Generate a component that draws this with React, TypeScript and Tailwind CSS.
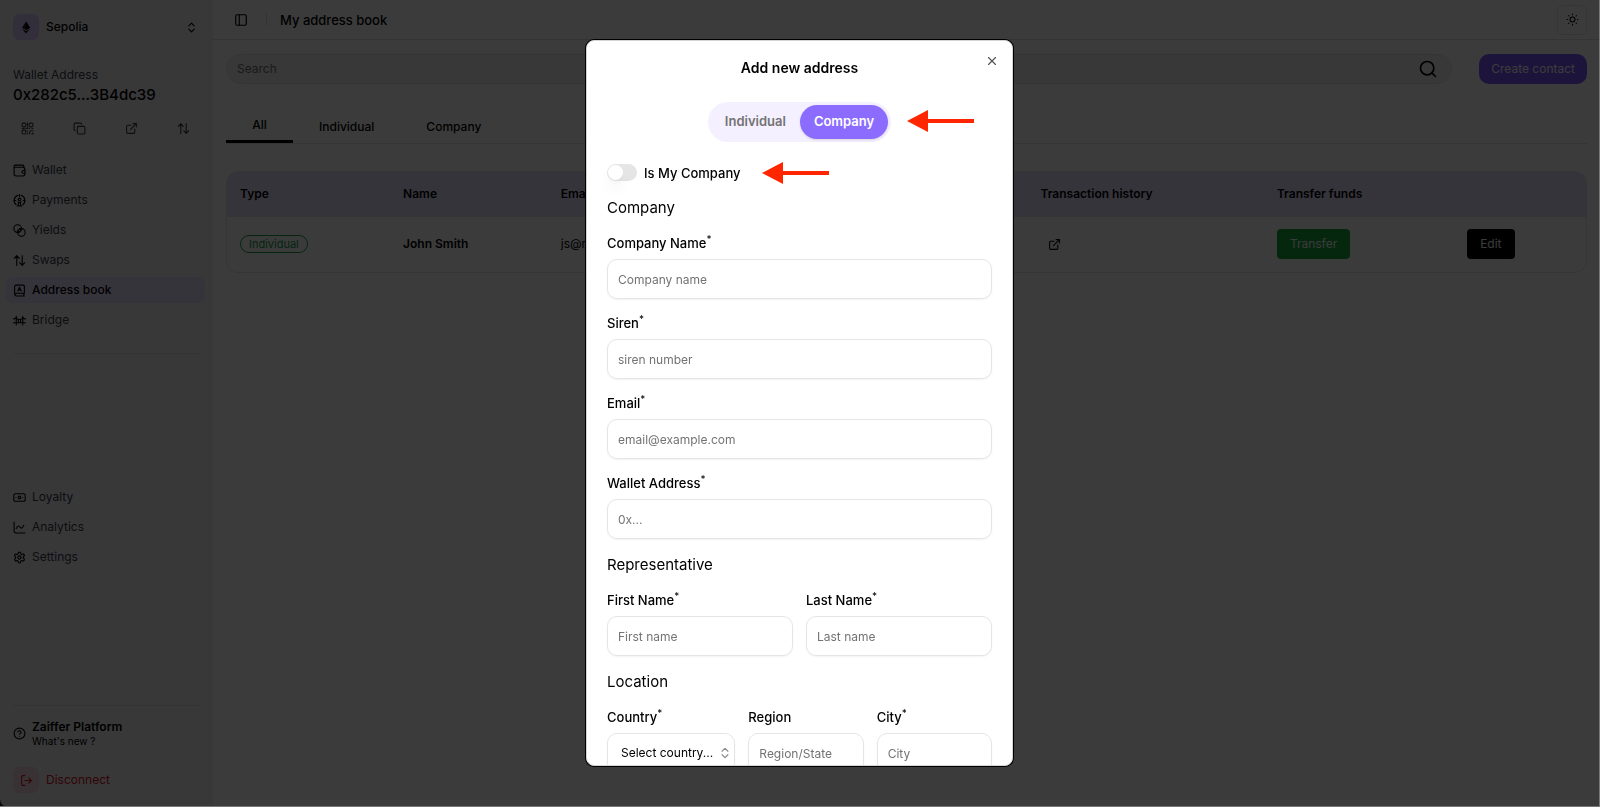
import React, { useState } from 'react';
import {
  ChevronsUpDown,
  CircleHelp,
  Copy,
  ExternalLink,
  LogOut,
  PanelLeft,
  Search,
  Settings,
  X,
} from 'lucide-react';

type IconProps = { className?: string };

const Svg: React.FC<IconProps & { children: React.ReactNode }> = ({ className, children }) => (
  <svg
    viewBox="0 0 24 24"
    fill="none"
    stroke="currentColor"
    strokeWidth="2"
    strokeLinecap="round"
    strokeLinejoin="round"
    className={className}
    aria-hidden="true"
  >
    {children}
  </svg>
);

const EthIcon = ({ className }: IconProps) => (
  <svg viewBox="0 0 16 24" className={className} aria-hidden="true">
    <path d="M8 0 L0 12.5 L8 17 L16 12.5 Z" fill="#222" />
    <path d="M8 0 L8 17 L16 12.5 Z" fill="#000" />
    <path d="M0 14.5 L8 19 L16 14.5 L8 24 Z" fill="#111" />
  </svg>
);

const WalletIcon = ({ className }: IconProps) => (
  <Svg className={className}>
    <path d="M2 5v13a4 4 0 0 0 4 4h12a4 4 0 0 0 4-4v-8a4 4 0 0 0-4-4H4a2 2 0 0 1 0-4h14a2 2 0 0 1 2 2v2.500" />
    <path d="M22 12h-3a2.500 2.500 0 0 0 0 5h3" />
  </Svg>
);

const PaymentsIcon = ({ className }: IconProps) => (
  <Svg className={className}>
    <path d="M6 20A10 10 0 0 1 9 2.500M18 20A10 10 0 0 0 15 2.500" />
    <path d="M12 1v4M8 22h8M9.500 22l1-6M14.500 22l-1-6M2 12h3M19 12h3" />
    <path d="M15 9.500c-.5-1-1.500-1.500-3-1.500-3.500 0-3.500 4 0 4s3.500 4 0 4c-1.500 0-2.500-.5-3-1.500" />
  </Svg>
);

const YieldsIcon = ({ className }: IconProps) => (
  <Svg className={className}>
    <circle cx="8.500" cy="8.500" r="7" />
    <circle cx="15.500" cy="15.500" r="7" />
    <path d="M12 9l3 3M9 12l3 3" />
  </Svg>
);

const SwapIcon = ({ className }: IconProps) => (
  <Svg className={className}>
    <path d="M7 21V3M2.500 8 7 3l4.500 5M17 3v18M12.500 16l4.500 5 4.500-5" />
  </Svg>
);

const AddressBookIcon = ({ className }: IconProps) => (
  <Svg className={className}>
    <path d="M21 17V4a2 2 0 0 0-2-2H6a3 3 0 0 0-3 3v14M21 17H6a2.500 2.500 0 0 0 0 5h15M20 17v5" />
    <path d="M9 13l3-7 3 7M10 11h4" />
  </Svg>
);

const BridgeIcon = ({ className }: IconProps) => (
  <Svg className={className}>
    <path d="M6 4v16M18 4v16M1 16h22M1 9c3 0 5-2 5-4 0 3 3 5 6 5s6-2 6-5c0 2 2 4 5 4M10 10v6M14 10v6" />
  </Svg>
);

const LoyaltyIcon = ({ className }: IconProps) => (
  <Svg className={className}>
    <rect x="1.500" y="5" width="21" height="14" rx="3" />
    <circle cx="12" cy="12" r="2.500" />
    <path d="M5.500 12h.01M18.500 12h.01" />
  </Svg>
);

const AnalyticsIcon = ({ className }: IconProps) => (
  <Svg className={className}>
    <path d="M2 2v17a3 3 0 0 0 3 3h17" />
    <path d="M6 14c3-7 5-5 7-2.500s4 2.500 7-3.500" />
  </Svg>
);

const QrIcon = ({ className }: IconProps) => (
  <Svg className={className}>
    <rect x="2" y="2" width="7" height="7" rx="2" />
    <rect x="15" y="2" width="7" height="7" rx="2" />
    <rect x="2" y="15" width="7" height="7" rx="2" />
    <path d="M12 2v4M12 9v3H9M2 12h4M15 12h1M20 12h2M12 16v1M12 21v1M16 22v-3a3 3 0 0 1 3-3h3M22 20v2h-2" />
  </Svg>
);

const SunIcon = ({ className }: IconProps) => (
  <Svg className={className}>
    <circle cx="12" cy="12" r="4.500" />
    <path d="M12 2v1M12 21v1M2 12h1M21 12h1M4.900 4.900l.4.4M18.700 18.700l.4.4M4.900 19.100l.4-.4M18.700 5.300l.4-.4" />
  </Svg>
);

const Arrow = ({ className }: IconProps) => (
  <svg viewBox="0 0 67 22" className={className} aria-hidden="true">
    <path d="M0 11 L21 0 V9 H67 V13 H21 V22 Z" fill="#ff2600" />
  </svg>
);

const mainNav = [
  { label: 'Wallet', icon: WalletIcon },
  { label: 'Payments', icon: PaymentsIcon },
  { label: 'Yields', icon: YieldsIcon },
  { label: 'Swaps', icon: SwapIcon },
  { label: 'Address book', icon: AddressBookIcon, active: true },
  { label: 'Bridge', icon: BridgeIcon },
];

const secondaryNav = [
  { label: 'Loyalty', icon: LoyaltyIcon },
  { label: 'Analytics', icon: AnalyticsIcon },
  { label: 'Settings', icon: Settings },
];

const NavList: React.FC<{ items: { label: string; icon: React.FC<IconProps>; active?: boolean }[] }> = ({ items }) => (
  <ul className="flex flex-col gap-1 pr-2 pl-1.5">
    {items.map(({ label, icon: Icon, active }) => (
      <li key={label}>
        <a
          href="#"
          className={`flex h-[26px] items-center gap-1.5 rounded-md px-[7px] text-xs ${
            active ? 'bg-[#e6dfff] font-medium text-black' : 'text-[#3c3c46]'
          }`}
        >
          <Icon className="h-[13px] w-[13px] text-black" />
          {label}
        </a>
      </li>
    ))}
  </ul>
);

const Sidebar = () => (
  <aside className="flex w-[213px] shrink-0 flex-col bg-[#f0f0f5] pb-[14px]">
    <button type="button" className="mx-[13px] mt-[14px] flex items-center text-left">
      <span className="flex h-[26px] w-[26px] items-center justify-center rounded-md bg-[#d8ccff]">
        <EthIcon className="h-[13px] w-2" />
      </span>
      <span className="ml-[7px] flex-1 text-xs font-medium">Sepolia</span>
      <ChevronsUpDown className="mr-0.5 h-[13px] w-[13px]" />
    </button>

    <div className="mx-[13px] mt-[26px]">
      <p className="text-xs leading-[18px] text-[#3c3c46]">Wallet Address</p>
      <p className="text-[15px] leading-[22px] font-medium text-black">0x282c5...3B4dc39</p>
      <div className="mt-4 flex justify-between pr-2.5 pl-2 text-[#3c3c46]">
        <button type="button" aria-label="Show QR code"><QrIcon className="h-[13px] w-[13px]" /></button>
        <button type="button" aria-label="Copy address"><Copy className="h-[13px] w-[13px]" /></button>
        <button type="button" aria-label="Open in explorer"><ExternalLink className="h-[13px] w-[13px]" /></button>
        <button type="button" aria-label="Swap"><SwapIcon className="h-[13px] w-[13px]" /></button>
      </div>
    </div>

    <nav className="mt-[22px] flex flex-1 flex-col">
      <NavList items={mainNav} />
      <hr className="mx-[13px] mt-5 border-[#e2e2e8]" />
      <div className="mt-[130px]">
        <NavList items={secondaryNav} />
      </div>
    </nav>

    <hr className="mx-[13px] border-[#dcdce2]" />
    <a href="#" className="mx-[13px] mt-[13px] flex items-center gap-1.5">
      <CircleHelp className="h-[13px] w-[13px]" />
      <span>
        <span className="block text-xs leading-4 font-semibold">Zaiffer Platform</span>
        <span className="block text-[10px] leading-3">What's new ?</span>
      </span>
    </a>
    <button type="button" className="mx-[13px] mt-5 flex items-center gap-[7px] text-xs text-[#dc1420]">
      <span className="flex h-[26px] w-[26px] items-center justify-center rounded-md bg-[#f3d9e0]">
        <LogOut className="h-[13px] w-[13px]" />
      </span>
      Disconnect
    </button>
  </aside>
);

const ContactsTable = () => (
  <div className="mt-[27px] overflow-hidden rounded-xl border border-[#e5e5e5]">
    <table className="w-full table-fixed text-left text-xs">
      <colgroup>
        <col className="w-[12%]" />
        <col className="w-[11.6%]" />
        <col className="w-[17.6%]" />
        <col className="w-[17.7%]" />
        <col className="w-[17.4%]" />
        <col className="w-[14%]" />
        <col />
      </colgroup>
      <thead className="bg-[#e6dfff]">
        <tr className="h-[44px] border-b border-[#e5e5e5]">
          <th className="px-[13px] font-semibold">Type</th>
          <th className="px-[13px] font-semibold">Name</th>
          <th className="px-[13px] font-semibold">Email</th>
          <th className="px-[13px] font-semibold">Wallet</th>
          <th className="px-[13px] font-semibold">Transaction history</th>
          <th className="px-[13px] font-semibold">Transfer funds</th>
          <th aria-label="Actions" />
        </tr>
      </thead>
      <tbody>
        <tr className="h-[56px]">
          <td className="px-[13px]">
            <span className="inline-block rounded-full border border-[#16a34a] px-2 text-[11px] leading-4 text-[#16a34a]">
              Individual
            </span>
          </td>
          <td className="px-[13px] font-semibold">John Smith</td>
          <td className="px-[13px]">js@m.io</td>
          <td className="px-[13px]">0x...</td>
          <td className="px-[21px]">
            <a href="#" aria-label="Transaction history" className="inline-block align-middle">
              <ExternalLink className="h-[13px] w-[13px]" />
            </a>
          </td>
          <td className="px-[13px]">
            <button type="button" className="h-[30px] rounded bg-[#16a83c] px-[13px] text-white">Transfer</button>
          </td>
          <td className="px-[13px]">
            <button type="button" className="h-[30px] rounded bg-black px-[13px] text-white">Edit</button>
          </td>
        </tr>
      </tbody>
    </table>
  </div>
);

const AddressBook = () => (
  <main className="min-w-0 flex-1 bg-white">
    <header className="flex h-10 items-center border-b border-[#dedede] pr-[13px] pl-[21px]">
      <button type="button" aria-label="Toggle sidebar"><PanelLeft className="h-3.5 w-3.5" /></button>
      <span className="mr-[13px] ml-[18px] h-[13px] w-px bg-[#dedede]" />
      <h1 className="flex-1 text-[13px] leading-5 font-medium">My address book</h1>
      <button
        type="button"
        aria-label="Toggle theme"
        className="flex h-[30px] w-[30px] items-center justify-center rounded-md border border-[#e5e5e5]"
      >
        <SunIcon className="h-[13px] w-[13px]" />
      </button>
    </header>

    <div className="px-[13px] pt-[14px]">
      <div className="flex items-center gap-[27px]">
        <label className="flex h-[30px] flex-1 items-center rounded-full border border-[#e5e5e5] bg-[#f0f0f0] pr-[13px] pl-2.5">
          <input type="search" aria-label="Search" placeholder="Search" className="flex-1 text-xs outline-none placeholder:text-[#737373]" />
          <Search className="h-5 w-5" />
        </label>
        <button type="button" className="h-[30px] rounded-[10px] bg-[#7a56ff] px-3 text-xs text-white">
          Create contact
        </button>
      </div>

      <div className="mt-[26px] flex h-[34px] items-stretch border-b border-[#e5e5e5] text-xs font-medium">
        <button type="button" className="w-[67px] border-b-[3px] border-black">All</button>
        <button type="button" className="px-[26px]">Individual</button>
        <button type="button" className="px-[26px]">Company</button>
      </div>

      <ContactsTable />
    </div>
  </main>
);

const Field: React.FC<{ id: string; label: string; placeholder: string; required?: boolean }> = ({
  id,
  label,
  placeholder,
  required = true,
}) => (
  <div className="min-w-0 flex-1">
    <label htmlFor={id} className="block h-[27px] text-[13px] leading-[22px] font-medium">
      {label}
      {required && <sup>*</sup>}
    </label>
    <input
      id={id}
      placeholder={placeholder}
      className="h-10 w-full rounded-[10px] border border-[#e5e5e5] px-2.5 pt-0.5 text-xs shadow-xs outline-none placeholder:text-[#737373]"
    />
  </div>
);

const SectionTitle: React.FC<{ children: React.ReactNode }> = ({ children }) => (
  <h3 className="mt-4 mb-3.5 text-[15px] leading-5">{children}</h3>
);

const AddAddressDialog = () => {
  const [kind, setKind] = useState('Company');

  return (
    <div
      role="dialog"
      aria-label="Add new address"
      className="relative h-[90vh] w-[427px] overflow-hidden rounded-lg border border-[#d4d4d4] bg-white px-5 pt-[17px] text-black ring-1 ring-black"
    >
      <h2 className="text-center text-sm leading-5 font-semibold">Add new address</h2>
      <button type="button" aria-label="Close" className="absolute top-[13px] right-[13px] text-[#555]">
        <X className="h-3.5 w-3.5" />
      </button>

      <div className="mt-6 flex justify-center">
        <div className="relative flex rounded-full bg-[#f4f0ff] p-[3px] text-[13px] font-semibold">
          {['Individual', 'Company'].map(option => (
            <button
              key={option}
              type="button"
              onClick={() => setKind(option)}
              className={`h-[34px] rounded-full px-3.5 ${
                kind === option ? 'bg-[#8c6cff] text-white shadow' : 'text-[#737373]'
              }`}
            >
              {option}
            </button>
          ))}
          <Arrow className="absolute top-2 left-full ml-4 h-[22px] w-[67px]" />
        </div>
      </div>

      <div className="mt-5 flex items-center">
        <label className="flex items-center gap-[7px] text-[13px] leading-5 font-medium">
          <input
            type="checkbox"
            role="switch"
            className="flex h-[17px] w-[30px] appearance-none items-center rounded-full bg-[#e5e5e5] px-px before:h-[15px] before:w-[15px] before:rounded-full before:bg-white before:shadow-lg"
          />
          Is My Company
        </label>
        <Arrow className="ml-[22px] h-[22px] w-[67px]" />
      </div>

      <form className="-mt-0.5">
        <SectionTitle>Company</SectionTitle>
        <div className="flex flex-col gap-[13px]">
          <Field id="company-name" label="Company Name" placeholder="Company name" />
          <Field id="siren" label="Siren" placeholder="siren number" />
          <Field id="email" label="Email" placeholder="email@example.com" />
          <Field id="wallet" label="Wallet Address" placeholder="0x..." />
        </div>

        <SectionTitle>Representative</SectionTitle>
        <div className="flex gap-[13px]">
          <Field id="first-name" label="First Name" placeholder="First name" />
          <Field id="last-name" label="Last Name" placeholder="Last name" />
        </div>

        <SectionTitle>Location</SectionTitle>
        <div className="flex gap-[13px]">
          <div className="relative w-1/3">
            <label htmlFor="country" className="block h-[27px] text-[13px] leading-[22px] font-medium">
              Country<sup>*</sup>
            </label>
            <select
              id="country"
              className="h-10 w-full appearance-none rounded-[10px] border border-[#e5e5e5] px-[13px] text-xs shadow-xs"
            >
              <option>Select country...</option>
            </select>
            <ChevronsUpDown className="pointer-events-none absolute right-[3px] bottom-[13px] h-3.5 w-3.5 text-[#888]" />
          </div>
          <Field id="region" label="Region" placeholder="Region/State" required={false} />
          <Field id="city" label="City" placeholder="City" />
        </div>
      </form>
    </div>
  );
};

export default function App() {
  return (
    <div className="bg-[#1c3a14] font-['Inter',sans-serif] text-black">
      <div className="flex min-h-screen overflow-hidden rounded-bl-lg">
        <Sidebar />
        <AddressBook />
      </div>
      <div className="fixed inset-0 flex items-center justify-center border-r border-b border-[#777] bg-black/77">
        <AddAddressDialog />
      </div>
    </div>
  );
}
